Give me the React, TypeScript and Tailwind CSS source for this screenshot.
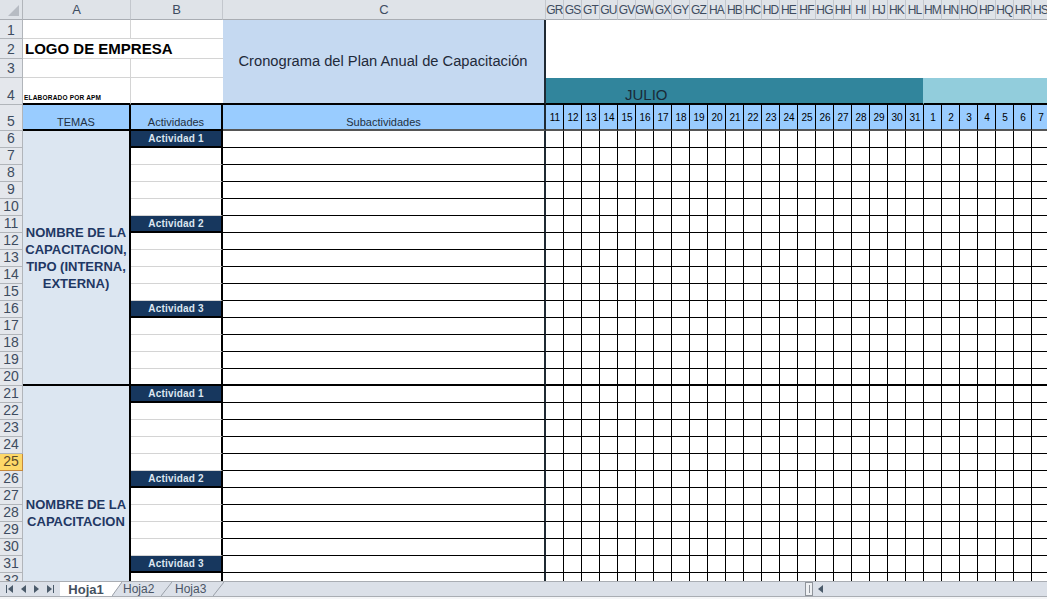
import { Fragment } from "react"

const columns = ["GR","GS","GT","GU","GV","GW","GX","GY","GZ","HA","HB","HC","HD","HE","HF","HG","HH","HI","HJ","HK","HL","HM","HN","HO","HP","HQ","HR","HS"]
const days = [11,12,13,14,15,16,17,18,19,20,21,22,23,24,25,26,27,28,29,30,31,1,2,3,4,5,6,7]
const rows = Array.from({ length: 30 }, (_, i) => i + 6)
const activityRows: Record<number, string> = {
    6: "Actividad 1", 11: "Actividad 2", 16: "Actividad 3",
    21: "Actividad 1", 26: "Actividad 2", 31: "Actividad 3",
}

const RowHead = ({ n }: { n: number }) => (
    <div className={`flex items-end justify-center border-b border-r text-[14px] leading-none ${n === 1 ? "pb-[1px]" : "pb-[2px]"} ${n === 25 ? "bg-[#fdd868] border-[#c6893c] text-[#5a4a2a]" : "bg-[#e4e7ec] border-[#b1b5ba] text-[#3e4c60]"}`}>
        {n}
    </div>
)

const ColHead = ({ label, className = "text-[12px] tracking-[-0.8px]" }: { label: string; className?: string }) => (
    <div className={`flex items-center justify-center overflow-hidden whitespace-nowrap bg-[#dfe3e8] border-r border-b border-r-[#c3c7cd] border-b-[#a9adb3] text-[#3e4c60] ${className}`}>
        {label}
    </div>
)

const App = () => {
    return (
        <div className="w-[1047px] h-[599px] overflow-hidden flex flex-col bg-[#f4f5f7] font-['Liberation_Sans',Arial,sans-serif] text-black">
            {/* Sheet */}
            <div className="h-[581px] overflow-hidden bg-white grid grid-cols-[23px_108px_92px_323px_repeat(28,18px)] grid-rows-[20px_19px_20px_19px_27px_26px] auto-rows-[17px]">
                {/* Column headers */}
                <div className="relative bg-[#dfe3e8] border-r border-b border-r-[#b1b5ba] border-b-[#a9adb3]">
                    <svg className="absolute right-[3px] bottom-[3px]" width="11" height="11" viewBox="0 0 11 11">
                        <path d="M11 0V11H0Z" fill="#b7bcc3" />
                    </svg>
                </div>
                <ColHead label="A" className="text-[13px]" />
                <ColHead label="B" className="text-[13px]" />
                <ColHead label="C" className="text-[13px]" />
                {columns.map((c) => <ColHead key={c} label={c} />)}

                {/* Row 1 */}
                <RowHead n={1} />
                <div className="border-r border-b border-[#d4d4d4]" />
                <div className="border-b border-[#d4d4d4]" />
                <div className="row-span-4 flex items-center justify-center bg-[#c5d9f1] border-r-2 border-r-[#1f2a33] border-b-2 border-b-black pr-[1px] text-[14.7px] text-[#1f2a3a]">
                    Cronograma del Plan Anual de Capacitación
                </div>
                <div className="col-span-28 row-span-3 bg-white" />

                {/* Row 2 */}
                <RowHead n={2} />
                <div className="col-span-2 flex items-center pt-[1px] pl-[2px] border-b border-[#d4d4d4] text-[15px] font-bold whitespace-nowrap">LOGO DE EMPRESA</div>

                {/* Row 3 */}
                <RowHead n={3} />
                <div className="border-r border-b border-[#d4d4d4]" />
                <div className="border-b border-[#d4d4d4]" />

                {/* Row 4 */}
                <RowHead n={4} />
                <div className="flex items-end border-r border-b-2 border-r-[#d4d4d4] border-b-black pl-[1px] pb-[1px] text-[6.5px] font-bold leading-[9px] tracking-[0.2px] whitespace-nowrap">ELABORADO POR APM</div>
                <div className="border-b-2 border-black" />
                <div className="col-span-21 flex items-end bg-[#31859c] border-r border-r-[#92cddc] border-b-2 border-b-black pl-[79px] text-[15px] leading-[16px] text-[#1a2a38]">JULIO</div>
                <div className="col-span-7 bg-[#92cddc] border-b-2 border-black" />

                {/* Row 5 */}
                <RowHead n={5} />
                <div className="flex items-end justify-center bg-[#99ccff] border-r-2 border-b-2 border-black pb-[1px] text-[11px] leading-none text-[#22303f]">TEMAS</div>
                <div className="flex items-end justify-center bg-[#99ccff] border-r-2 border-b-2 border-black pb-[1px] text-[11px] leading-none text-[#22303f]">Actividades</div>
                <div className="flex items-end justify-center bg-[#99ccff] border-r-2 border-b-2 border-b-[#555] border-r-[#1f2a33] pb-[1px] text-[11px] leading-none text-[#22303f]">Subactividades</div>
                {days.map((d, i) => (
                    <div key={i} className="flex items-center justify-center bg-[#99ccff] border-r border-r-black border-b-2 border-b-[#555] pl-[1px] text-[10px] text-black">{d}</div>
                ))}

                {/* Body rows */}
                {rows.map((n) => {
                    const endOfBlock = n === 20 || n === 35
                    const bottom = endOfBlock ? "border-b-2 border-b-black" : "border-b border-b-black"
                    return (
                        <Fragment key={n}>
                            <RowHead n={n} />
                            {n === 6 && (
                                <div className="row-span-15 flex items-center justify-center whitespace-nowrap bg-[#dce6f1] border-r-2 border-r-black border-b-2 border-b-black text-center text-[13px] leading-[17px] font-bold text-[#1f3864]">
                                    NOMBRE DE LA<br />CAPACITACION,<br />TIPO (INTERNA,<br />EXTERNA)
                                </div>
                            )}
                            {n === 21 && (
                                <div className="row-span-15 flex items-center justify-center whitespace-nowrap bg-[#dce6f1] border-r-2 border-r-black pb-[2px] text-center text-[13px] leading-[17px] font-bold text-[#1f3864]">
                                    NOMBRE DE LA<br />CAPACITACION
                                </div>
                            )}
                            {activityRows[n] ? (
                                <div className="flex items-center justify-center bg-[#17375e] border-r-2 border-b-2 border-black text-[10px] font-bold tracking-[0.2px] text-[#dce6f1]">{activityRows[n]}</div>
                            ) : (
                                <div className={`border-r-2 border-r-black ${endOfBlock ? "border-b-2 border-b-black" : "border-b border-b-[#d4d4d4]"}`} />
                            )}
                            <div className={`border-r-2 border-r-[#1f2a33] ${bottom}`} />
                            {days.map((_, i) => (
                                <div key={i} className={`border-r border-r-black ${bottom}`} />
                            ))}
                        </Fragment>
                    )
                })}
            </div>

            {/* Sheet tabs and scrollbar */}
            <div className="h-[16px] flex items-stretch bg-[#dbe0e8] border-t border-b border-t-[#a9adb3] border-b-[#a9adb3] text-[12px] leading-none text-[#4a5566]">
                <div className="w-[60px] flex items-center justify-around px-[2px] text-[#4a5a6a]">
                    <svg width="7" height="8" viewBox="0 0 7 8"><path d="M0 0h1v8H0zM7 0v8L2 4z" fill="currentColor" /></svg>
                    <svg width="5" height="8" viewBox="0 0 5 8"><path d="M5 0v8L0 4z" fill="currentColor" /></svg>
                    <svg width="5" height="8" viewBox="0 0 5 8"><path d="M0 0v8l5-4z" fill="currentColor" /></svg>
                    <svg width="7" height="8" viewBox="0 0 7 8"><path d="M6 0h1v8H6zM0 0v8l5-4z" fill="currentColor" /></svg>
                </div>
                <div className="w-[52px] flex items-center justify-center bg-white font-bold text-[13px] text-[#44515f]">Hoja1</div>
                <svg width="10" height="14" viewBox="0 0 10 14"><path d="M0 14L10 0H0Z" fill="#fff" /><path d="M0 14L10 0" stroke="#9aa0a8" fill="none" /></svg>
                <div className="w-[39px] flex items-center pl-[1px]">Hoja2</div>
                <svg width="11" height="14" viewBox="0 0 11 14"><path d="M0 14L11 0" stroke="#9aa0a8" fill="none" /></svg>
                <div className="w-[41px] flex items-center pl-[3px]">Hoja3</div>
                <svg width="11" height="14" viewBox="0 0 11 14"><path d="M0 14L11 0" stroke="#9aa0a8" fill="none" /></svg>
                <div className="flex-1" />
                <div className="w-[242px] flex items-center">
                    <div className="w-[8px] h-[14px] flex items-center justify-center bg-[#eef0f3] border border-[#8f949b]">
                        <div className="w-[1px] h-[8px] bg-[#8f949b]" />
                    </div>
                    <svg className="ml-[5px]" width="5" height="8" viewBox="0 0 5 8"><path d="M5 0v8L0 4z" fill="#4a5a6a" /></svg>
                </div>
            </div>
        </div>
    )
}

export default App
